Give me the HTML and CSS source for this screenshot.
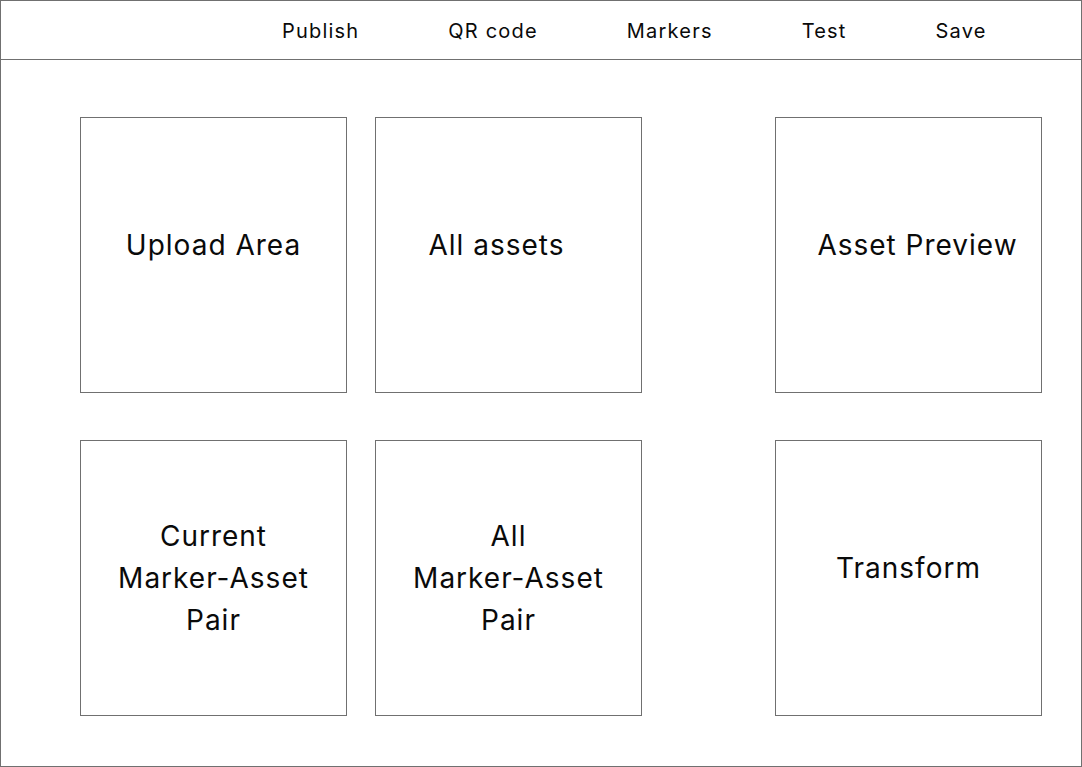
FILE: index.html
```html
<!DOCTYPE html>
<html lang="en">
<head>
<meta charset="utf-8">
<title>Marker editor wireframe</title>
<link rel="stylesheet" href="styles.css">
</head>
<body>
<div class="frame">
  <header class="topbar">
    <nav class="nav">
      <span class="nav-item">Publish</span>
      <span class="nav-item">QR code</span>
      <span class="nav-item">Markers</span>
      <span class="nav-item">Test</span>
      <span class="nav-item">Save</span>
    </nav>
  </header>
  <main class="grid">
    <section class="box"><span class="label up">Upload Area</span></section>
    <section class="box"><span class="label up left">All assets</span></section>
    <section class="box box-far"><span class="label up right">Asset Preview</span></section>
    <section class="box"><span class="label">Current<br>Marker-Asset<br>Pair</span></section>
    <section class="box"><span class="label">All<br>Marker-Asset<br>Pair</span></section>
    <section class="box box-far"><span class="label up">Transform</span></section>
  </main>
</div>
</body>
</html>
```

FILE: styles.css
```css
* { box-sizing: border-box; }
html, body { margin: 0; padding: 0; background: #ffffff; }
body {
  font-family: "Inter", "DejaVu Sans", sans-serif;
  color: #0a0a0a;
}
.frame {
  width: 1082px;
  height: 767px;
  border: 1px solid #707070;
  display: flex;
  flex-direction: column;
}
.topbar {
  height: 59px;
  border-bottom: 1px solid #707070;
  display: flex;
  align-items: center;
  padding-left: 281px;
  padding-top: 2px;
}
.nav {
  display: flex;
  gap: 89px;
}
.nav-item {
  font-size: 20px;
  letter-spacing: 1.2px;
  line-height: 24px;
}
.grid {
  display: grid;
  grid-template-columns: 267px 267px 77px 267px;
  grid-template-rows: 276px 276px;
  column-gap: 28px;
  row-gap: 47px;
  padding: 57px 0 0 79px;
}
.box {
  border: 1px solid #707070;
  display: flex;
  align-items: center;
  justify-content: center;
  text-align: center;
}
.box-far { grid-column: 4; }
.label {
  font-size: 28px;
  letter-spacing: 1px;
  line-height: 42px;
  white-space: nowrap;
}
.label.up { margin-bottom: 20px; }
.label.left { margin-right: 24px; }
.label.right { margin-left: 18px; }
```
